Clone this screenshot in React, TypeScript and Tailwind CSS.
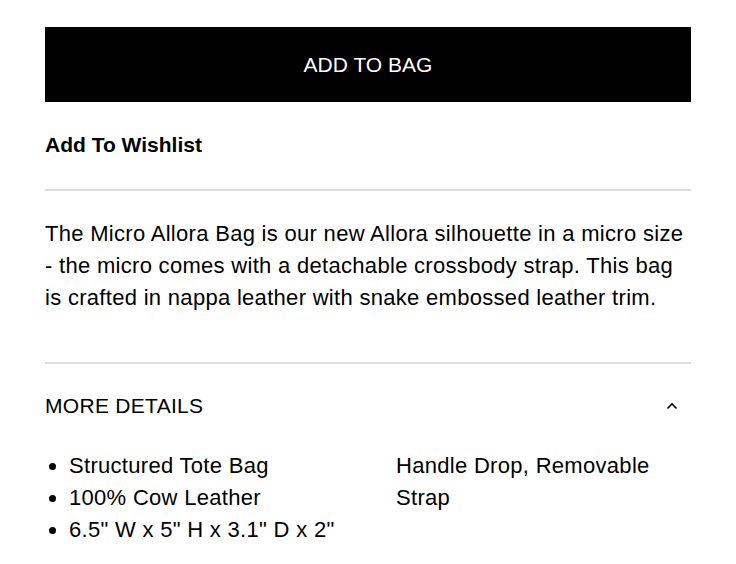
export default function App() {
  return (
    <div className="min-h-screen bg-white text-black font-['Liberation_Sans',Arial,sans-serif]">
      <div className="px-[45px] pt-[27px]">
        <button className="w-full h-[75px] bg-black text-white text-[21px]">
          ADD TO BAG
        </button>

        <div className="pt-[29px] pb-[30px] text-[21px] leading-[28px] font-bold">
          Add To Wishlist
        </div>
        <div className="h-[2px] bg-[#dcdcdc]" />

        <p className="mt-[27px] pb-[48px] text-[22px] leading-[32px] tracking-[0.3px]">
          The Micro Allora Bag is our new Allora silhouette in a micro size - the micro comes with a detachable
          crossbody strap. This bag is crafted in nappa leather with snake embossed leather trim.
        </p>
        <div className="h-[2px] bg-[#dcdcdc]" />

        <div className="mt-[28px] flex items-center justify-between">
          <span className="text-[21px] leading-[28px] tracking-[0.3px]">MORE DETAILS</span>
          <svg width="12" height="8" viewBox="0 0 12 8" className="mr-[13px]">
            <path d="M1.5 6.5 L6 2 L10.5 6.5" fill="none" stroke="#000" strokeWidth="1.6" />
          </svg>
        </div>

        <ul className="mt-[30px] list-disc pl-[24px] columns-2 gap-x-8 text-[22px] leading-[32px] tracking-[0.3px] [orphans:1] [widows:1]">
          <li>Structured Tote Bag</li>
          <li>100% Cow Leather</li>
          <li>6.5" W x 5" H x 3.1" D x 2" Handle Drop, Removable Strap</li>
        </ul>
      </div>
    </div>
  );
}
